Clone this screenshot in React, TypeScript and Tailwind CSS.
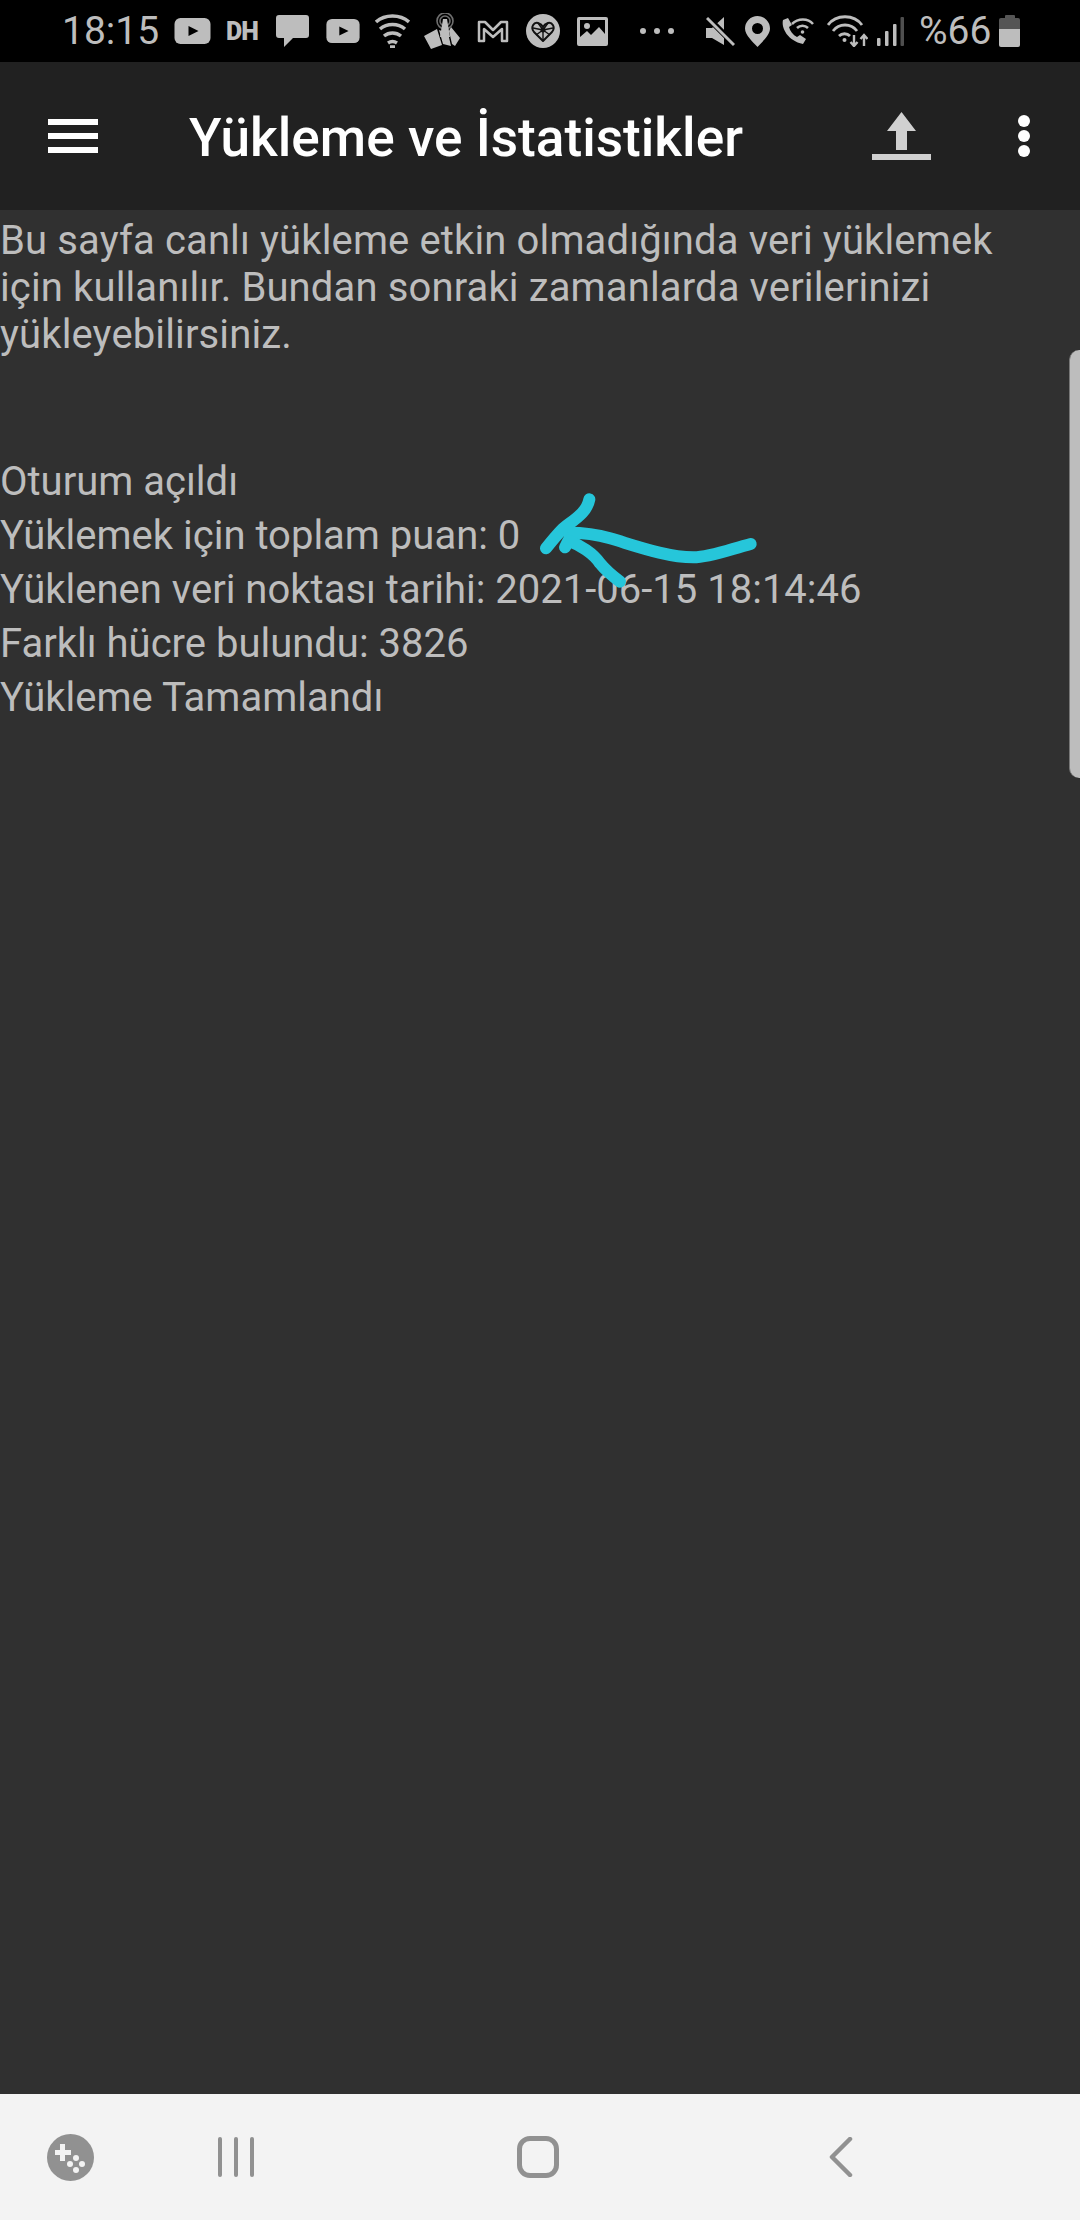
import React from 'react';

const iconFill = '#bdbdbd';

const YoutubeIcon = ({ className }: { className: string }) => (
	<svg className={className} viewBox="0 0 36 26">
		<rect width="36" height="26" rx="6" fill={iconFill} />
		<path d="M14 8 L24 13 L14 18 Z" fill="#000" />
	</svg>
);

const StatusBar = () => (
	<div className="flex h-[62px] items-center bg-black pl-[62px] text-[#bdbdbd]">
		<span className="w-[94px] text-[39px] leading-none">18:15</span>
		<YoutubeIcon className="ml-[18px] h-[26px] w-[37px]" />
		<span className="ml-[15px] w-[34px] text-[25px] font-black leading-none tracking-[-1px]">DH</span>
		<svg className="ml-[16px] h-[33px] w-[33px]" viewBox="0 0 33 33">
			<path d="M3 0 H30 A3 3 0 0 1 33 3 V20 A3 3 0 0 1 30 23 H17 L8 32 V23 H3 A3 3 0 0 1 0 20 V3 A3 3 0 0 1 3 0 Z" fill={iconFill} />
		</svg>
		<YoutubeIcon className="ml-[17px] h-[24px] w-[34px]" />
		<svg className="ml-[15px] h-[34px] w-[35px]" viewBox="0 0 35 34" fill="none" stroke={iconFill} strokeWidth="3.5">
			<path d="M1 8 C10 0 25 0 34 8" />
			<path d="M5 15 C12 9 23 9 30 15" />
			<path d="M9 22 C14 18 21 18 26 22" />
			<path d="M13 29 C16 27 19 27 22 29" />
			<path d="M15 33 H20" />
		</svg>
		<svg className="ml-[14px] h-[36px] w-[37px]" viewBox="0 0 37 36">
			<path d="M0 23 L13 16 L18 32 L7 36 Z M15 17 L24 20 L27 33 L19 31 Z M27 14 L36 25 L31 33 L28 31 L25 18 Z" fill={iconFill} />
			<circle cx="21" cy="8" r="8" fill="none" stroke="#6f6f6f" strokeWidth="1.6" />
			<circle cx="21" cy="8" r="5" fill="none" stroke="#6f6f6f" strokeWidth="1.6" />
			<path d="M19 6 H23 L26 24 H16 Z" fill={iconFill} />
		</svg>
		<svg className="ml-[16px] h-[23px] w-[32px]" viewBox="0 0 32 23" fill="none" stroke={iconFill} strokeWidth="2.5" strokeLinejoin="round">
			<path d="M2 2 H8 L16 10 L24 2 H30 V21 H25 V9 L16 17 L7 9 V21 H2 Z" />
		</svg>
		<svg className="ml-[17px] h-[34px] w-[34px]" viewBox="0 0 34 34">
			<circle cx="17" cy="17" r="17" fill={iconFill} />
			<path d="M17 27 L8 18 C4 13 8 8 12 9 C15 10 16 11 17 13 C18 11 19 10 22 9 C26 8 30 13 26 18 Z" fill="none" stroke="#111" strokeWidth="2" strokeLinejoin="round" />
			<path d="M17 16 V27 M17 16 L7 14 M17 16 L27 14 M17 16 L10 21 M17 16 L24 21 M17 16 L12 9 M17 16 L22 9" stroke="#111" strokeWidth="1.4" fill="none" />
			<circle cx="17" cy="16" r="2.5" fill="#111" />
		</svg>
		<svg className="ml-[17px] h-[29px] w-[31px]" viewBox="0 0 31 29">
			<path fillRule="evenodd" d="M2 0 H29 A2 2 0 0 1 31 2 V27 A2 2 0 0 1 29 29 H2 A2 2 0 0 1 0 27 V2 A2 2 0 0 1 2 0 Z M3 3 V20 L10 14 L14 18 L22 10 L28 17 V3 Z" fill={iconFill} />
			<circle cx="10" cy="9" r="3" fill={iconFill} />
		</svg>
		<div className="ml-[32px] flex w-[34px] justify-between">
			<span className="size-[6px] rounded-full bg-[#bdbdbd]" />
			<span className="size-[6px] rounded-full bg-[#bdbdbd]" />
			<span className="size-[6px] rounded-full bg-[#bdbdbd]" />
		</div>
		<svg className="ml-[32px] h-[31px] w-[29px]" viewBox="0 0 29 31">
			<path d="M0 12 H6 L18 1 V29 L6 22 H0 Z" fill={iconFill} />
			<path d="M3 3 L29 29" stroke="#000" strokeWidth="6" />
			<path d="M1 2 L28 29" stroke={iconFill} strokeWidth="3" />
		</svg>
		<svg className="ml-[10px] h-[31px] w-[25px]" viewBox="0 0 25 31">
			<path fillRule="evenodd" d="M12.5 0 A12.5 12.5 0 0 1 25 12.5 C25 19 17 26 12.5 31 C8 26 0 19 0 12.5 A12.5 12.5 0 0 1 12.5 0 Z M12.5 7 A5.5 5.5 0 1 0 12.5 18 A5.5 5.5 0 1 0 12.5 7 Z" fill={iconFill} />
		</svg>
		<svg className="ml-[10px] h-[28px] w-[34px]" viewBox="0 0 34 28" fill="none" stroke={iconFill}>
			<path d="M3 3 C1 11 8 24 23 27 L26 22 L20 18 L17 20 C13 18 10 14 9 10 L12 8 L8 1 Z" fill={iconFill} stroke="none" />
			<path d="M12 7 C18 1 28 1 33 7" strokeWidth="2.5" />
			<path d="M17 11 C20 8 25 8 28 11" strokeWidth="2.5" />
			<circle cx="22.5" cy="15" r="1.8" fill={iconFill} stroke="none" />
		</svg>
		<svg className="ml-[13px] h-[32px] w-[41px]" viewBox="0 0 41 32" fill="none" stroke={iconFill} strokeWidth="2.8">
			<path d="M1 10 C9 -1 27 -1 35 10" />
			<path d="M6 16 C12 8 24 8 30 16" />
			<path d="M12 21 C15 18 20 18 23 21" />
			<circle cx="17.5" cy="25" r="2" fill={iconFill} stroke="none" />
			<path d="M27 20 V31 M23.5 27 L27 31 L30.5 27" strokeWidth="2.4" />
			<path d="M37 31 V20 M33.5 24 L37 20 L40.5 24" strokeWidth="2.4" />
		</svg>
		<svg className="ml-[9px] h-[29px] w-[27px]" viewBox="0 0 27 29">
			<rect x="0" y="21" width="3.5" height="8" rx="1" fill={iconFill} />
			<rect x="8" y="14" width="3.5" height="15" rx="1" fill={iconFill} />
			<rect x="16" y="7" width="3.5" height="22" rx="1" fill={iconFill} />
			<rect x="23.5" y="0" width="3.5" height="29" rx="1" fill="#4f4f4f" />
		</svg>
		<span className="ml-[15px] w-[70px] text-[39px] leading-none">%66</span>
		<div className="ml-[10px] flex h-[32px] w-[21px] flex-col items-center">
			<span className="h-[3px] w-[10px] rounded-t-[1px] bg-[#555555]" />
			<span className="h-[11px] w-[21px] rounded-t-[2px] bg-[#555555]" />
			<span className="h-[18px] w-[21px] rounded-b-[2px] bg-[#bdbdbd]" />
		</div>
	</div>
);

const Header = () => (
	<div className="flex h-[148px] items-center bg-[#212121]">
		<div className="ml-[48px] flex h-[34px] w-[50px] flex-col justify-between">
			<span className="h-[6px] bg-white" />
			<span className="h-[6px] bg-white" />
			<span className="h-[6px] bg-white" />
		</div>
		<h1 className="ml-[91px] flex-1 pt-[5px] text-[53.2px] font-medium leading-none text-white">Yükleme ve İstatistikler</h1>
		<svg className="h-[48px] w-[59px]" viewBox="0 0 59 48">
			<path d="M29.5 0 L44 19 H35 V38 H24 V19 H15 Z" fill="#d0d0d0" />
			<rect y="42" width="59" height="6" fill="#d0d0d0" />
		</svg>
		<div className="ml-[87px] mr-[50px] flex h-[42px] w-[12px] flex-col justify-between">
			<span className="size-[12px] rounded-full bg-white" />
			<span className="size-[12px] rounded-full bg-white" />
			<span className="size-[12px] rounded-full bg-white" />
		</div>
	</div>
);

const NavBar = () => (
	<div className="flex h-[126px] items-center bg-[#f3f3f3]">
		<svg className="ml-[47px] h-[47px] w-[47px]" viewBox="0 0 47 47">
			<circle cx="23.5" cy="23.5" r="23.5" fill="#919191" />
			<path d="M13 10 H18 V16 H24 V21 H18 V27 H13 V21 H8 V16 H13 Z" fill="#f3f3f3" />
			<circle cx="29" cy="24" r="3" fill="#f3f3f3" />
			<circle cx="23" cy="30" r="3" fill="#f3f3f3" />
			<circle cx="35" cy="30" r="3" fill="#f3f3f3" />
			<circle cx="29" cy="36" r="3" fill="#f3f3f3" />
		</svg>
		<div className="ml-[124px] flex h-[40px] w-[36px] justify-between">
			<span className="w-[4px] rounded-full bg-[#919191]" />
			<span className="w-[4px] rounded-full bg-[#919191]" />
			<span className="w-[4px] rounded-full bg-[#919191]" />
		</div>
		<div className="ml-[263px] h-[42px] w-[42px] rounded-[13px] border-[5px] border-[#919191]" />
		<svg className="ml-[270px] h-[40px] w-[24px]" viewBox="0 0 24 40" fill="none" stroke="#919191" strokeWidth="4.5" strokeLinecap="round" strokeLinejoin="round">
			<path d="M21 2 L3 20 L21 38" />
		</svg>
	</div>
);

export default function App() {
	return (
		<div className="relative flex h-[2220px] w-[1080px] flex-col overflow-hidden bg-[#303030] font-['Roboto',sans-serif]">
			<StatusBar />
			<Header />
			<div className="flex-1 pt-[7px] text-[40px] text-[#bdbdbd]">
				<p className="leading-[47px] tracking-[0.13px]">
					Bu sayfa canlı yükleme etkin olmadığında veri yüklemek
					<br />
					için kullanılır. Bundan sonraki zamanlarda verilerinizi
					<br />
					yükleyebilirsiniz.
				</p>
				<div className="mt-[97px] leading-[54px]">
					<div>Oturum açıldı</div>
					<div>Yüklemek için toplam puan: 0</div>
					<div>Yüklenen veri noktası tarihi: 2021-06-15 18:14:46</div>
					<div>Farklı hücre bulundu: 3826</div>
					<div>Yükleme Tamamlandı</div>
				</div>
			</div>
			<NavBar />
			{/* handle of the side panel */}
			<div className="absolute right-0 top-[350px] h-[428px] w-[11px] rounded-l-[10px] border-l border-[#777777] bg-[#bdbdbd]" />
			{/* arrow drawn by hand over the screenshot */}
			<svg className="absolute left-[480px] top-[470px] h-[130px] w-[300px]" viewBox="0 0 900 390" fill="none" stroke="#26c6da" strokeWidth="36" strokeLinecap="round" strokeLinejoin="round">
				<path d="M812 222 C750 238 690 262 640 262 C560 262 460 225 390 205 C340 190 300 188 265 188" />
				<path d="M328 88 C320 130 280 150 250 175 C230 195 210 220 198 235" />
				<path d="M255 232 L265 212 C300 225 340 250 360 280 C380 305 400 320 420 335" />
			</svg>
		</div>
	);
}
